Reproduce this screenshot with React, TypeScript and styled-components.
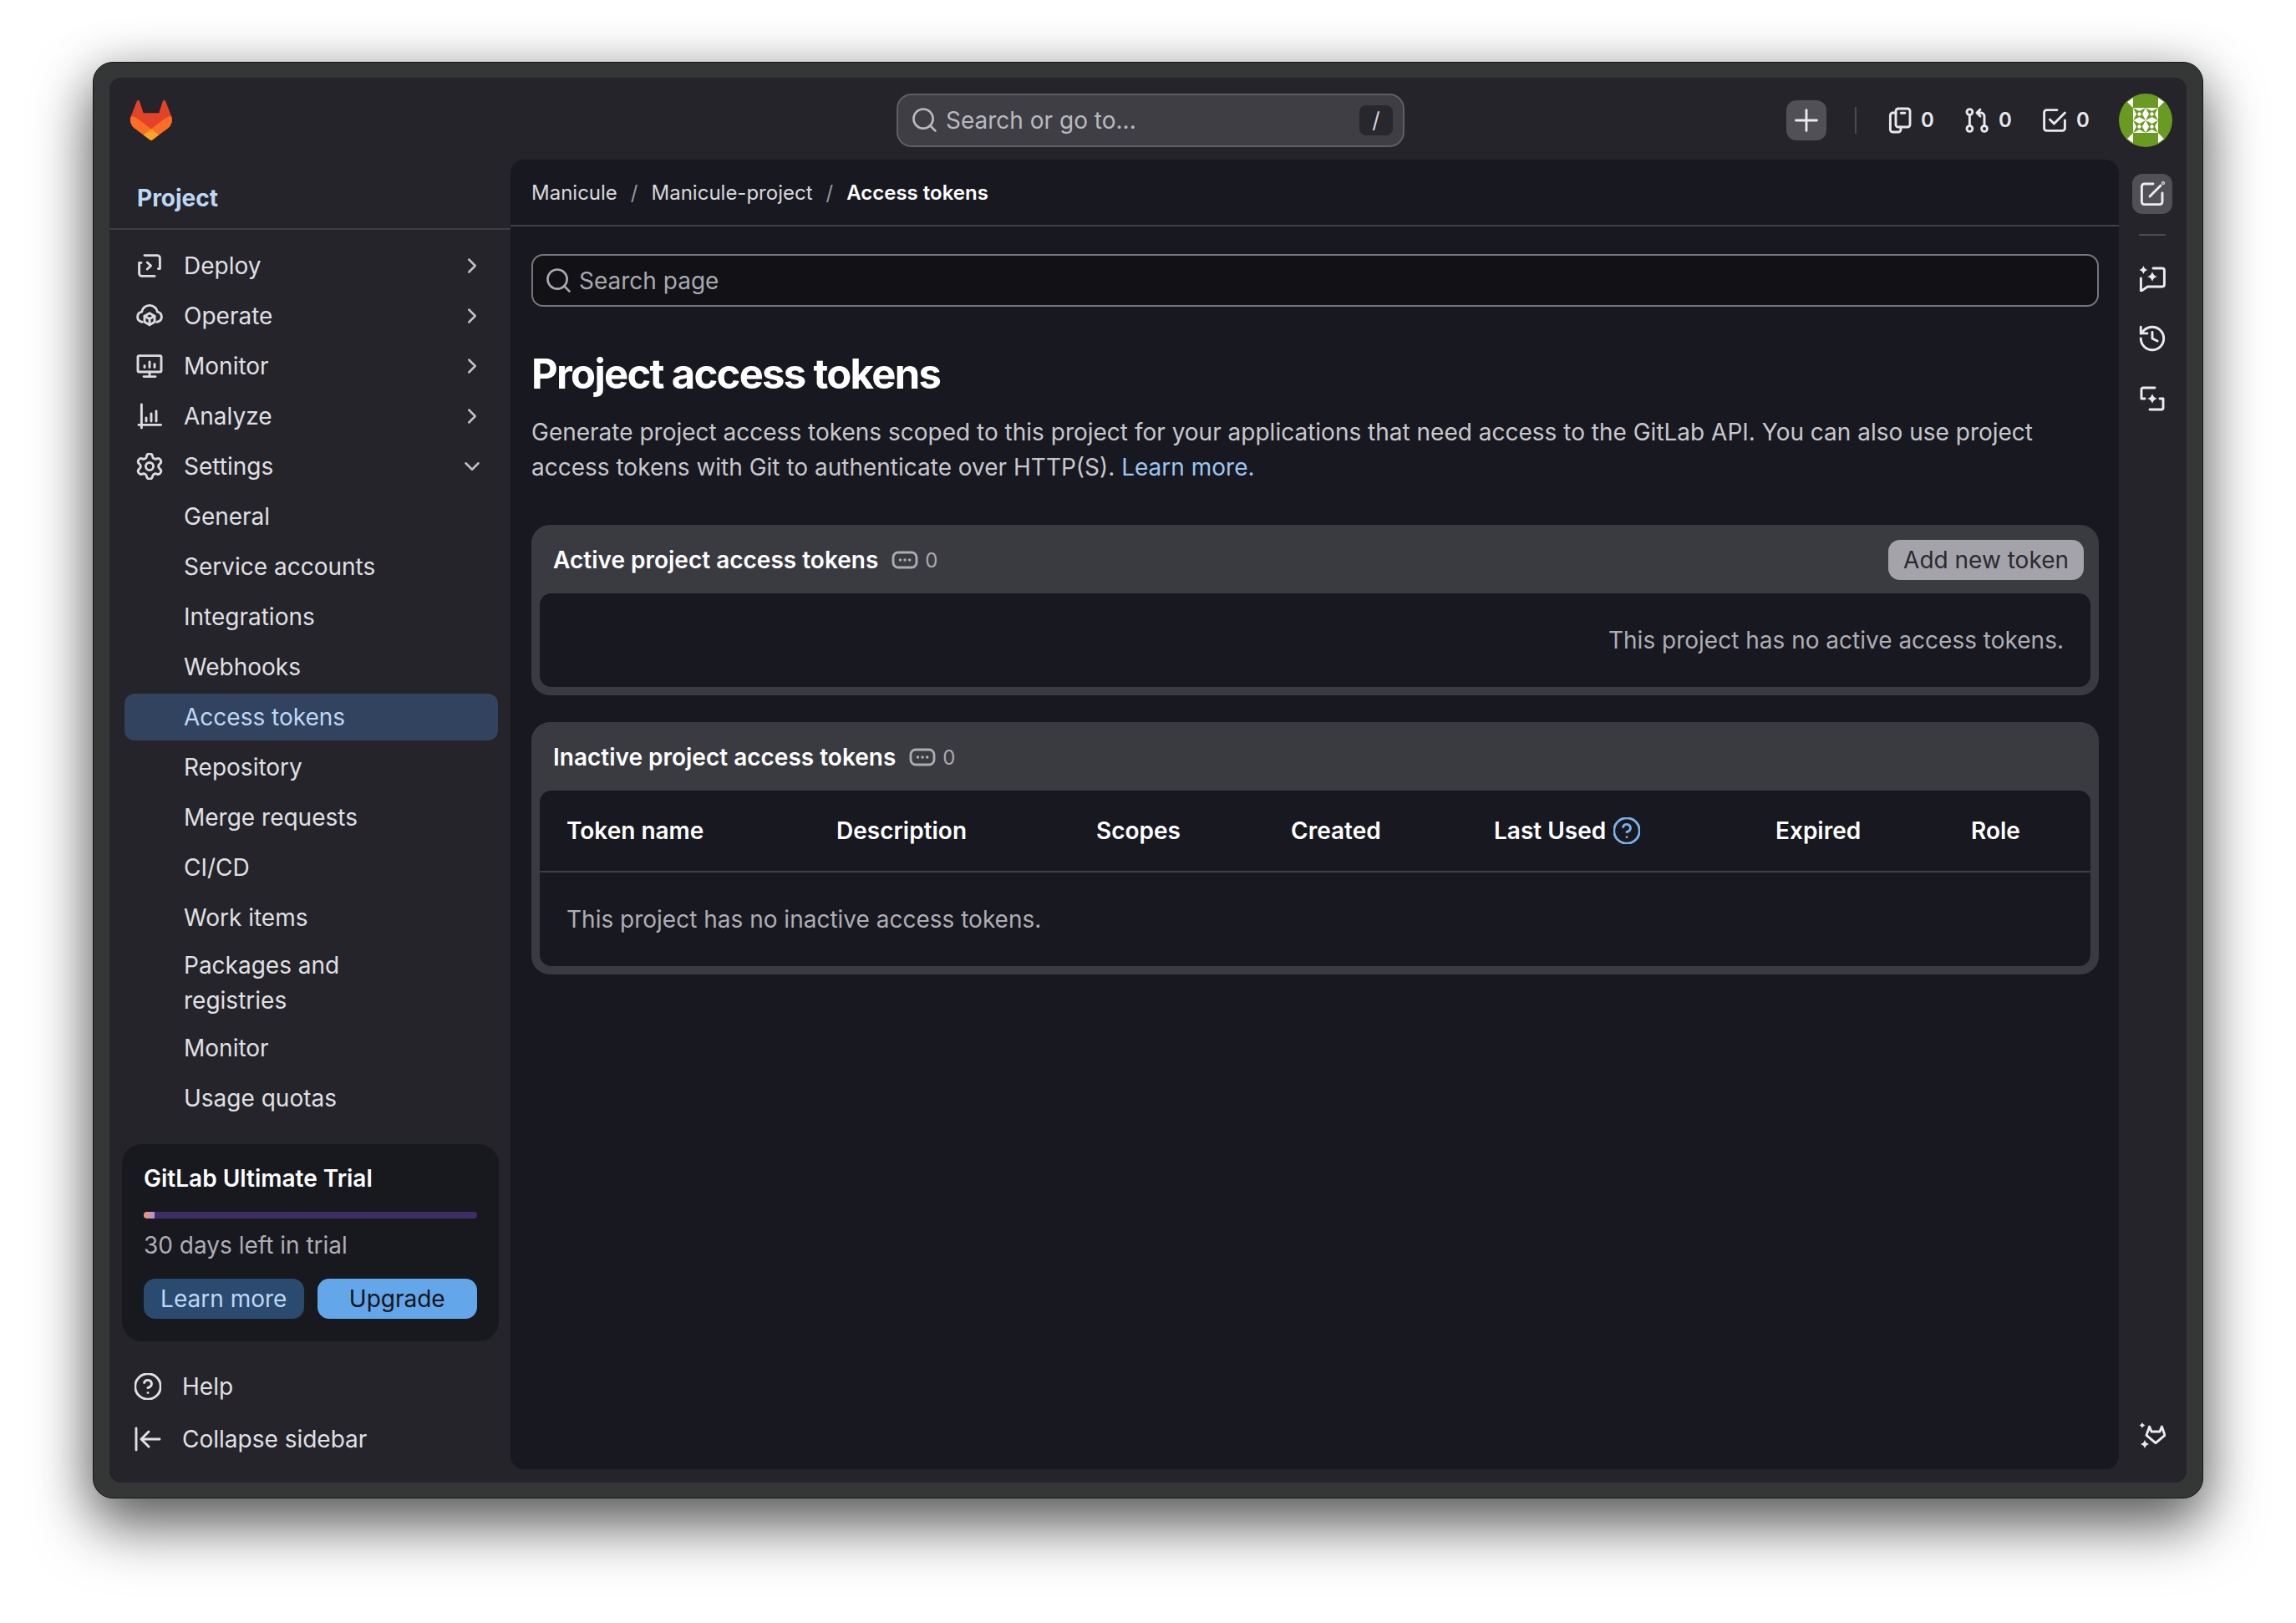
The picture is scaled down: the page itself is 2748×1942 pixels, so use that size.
import React from 'react';
import styled, { createGlobalStyle } from 'styled-components';
import { ChevronDown, ChevronRight, CircleHelp, History, Plus, Search, Settings } from 'lucide-react';

const GlobalStyle = createGlobalStyle`
  html, body {
    margin: 0;
    padding: 0;
    background: #ffffff;
  }
  body {
    font-family: Inter, "Noto Sans", "Liberation Sans", sans-serif;
  }
  * {
    box-sizing: border-box;
  }
`;

const Page = styled.div`
  width: 2748px;
  height: 1942px;
  padding: 74px 111px 149px;
  overflow: hidden;
`;
const Window = styled.div`
  height: 100%;
  padding: 18px 19px;
  background: #353636;
  border: 1.5px solid #16161a;
  border-radius: 24px;
  box-shadow: 0 34px 70px rgba(0, 0, 0, 0.55), 0 8px 60px rgba(0, 0, 0, 0.25);
`;
const Shell = styled.div`
  display: flex;
  flex-direction: column;
  height: 100%;
  background: #24242a;
  border-radius: 14px;
  color: #e4e4e8;
`;
const TopBar = styled.header`
  display: flex;
  align-items: center;
  flex: none;
  height: 98px;
  padding: 3px 17px 0 25px;
`;
const Logo = styled.svg`
  width: 50px;
  height: 48px;
  flex: none;
`;
const GlobalSearch = styled.div`
  display: flex;
  align-items: center;
  gap: 11px;
  width: 608px;
  height: 64px;
  margin-left: 867px;
  padding: 0 12px 0 17px;
  background: #3e3e44;
  border: 2px solid #5e5e65;
  border-radius: 18px;
  color: #b9b9be;
  font-size: 28px;
`;
const GlobalSearchText = styled.span`
  flex: 1;
`;
const Kbd = styled.kbd`
  display: flex;
  align-items: center;
  justify-content: center;
  width: 40px;
  height: 36px;
  background: #27272c;
  border-radius: 8px;
  color: #d4d4d8;
  font-family: inherit;
  font-size: 26px;
`;
const TopActions = styled.div`
  display: flex;
  align-items: center;
  gap: 35px;
  margin-left: auto;
`;
const PlusButton = styled.button`
  display: flex;
  align-items: center;
  justify-content: center;
  width: 48px;
  height: 48px;
  padding: 0;
  background: #505056;
  border: none;
  border-radius: 12px;
  color: #ececf0;
`;
const TopSeparator = styled.span`
  width: 2px;
  height: 32px;
  margin-left: -1px;
  background: #4b4b52;
`;
const Counter = styled.div`
  display: flex;
  align-items: center;
  gap: 10px;
  color: #e8e8ec;
  font-size: 24px;
  font-weight: 600;
`;
const CounterValue = styled.span`
  width: 16px;
`;
const Avatar = styled.svg`
  width: 64px;
  height: 64px;
  flex: none;
`;

const Body = styled.div`
  display: flex;
  flex: 1;
  min-height: 0;
`;
const Sidebar = styled.aside`
  display: flex;
  flex-direction: column;
  flex: none;
  width: 480px;
`;
const SidebarHeader = styled.div`
  display: flex;
  align-items: center;
  flex: none;
  height: 84px;
  padding: 10px 0 0 33px;
  border-bottom: 2px solid #3c3c43;
  color: #bcd8f4;
  font-size: 28px;
  font-weight: 700;
`;
const Nav = styled.nav`
  display: flex;
  flex-direction: column;
  gap: 4px;
  padding: 15px 15px 0 18px;
`;
const NavItem = styled.a<{ $active?: boolean }>`
  display: flex;
  align-items: center;
  gap: 25px;
  min-height: 56px;
  padding: 4px 16px 4px 14px;
  border-radius: 12px;
  background: ${(p) => (p.$active ? '#32435f' : 'transparent')};
  color: ${(p) => (p.$active ? '#bcd8f4' : '#e0e0e4')};
  font-size: 28px;
  line-height: 42px;
`;
const NavIcon = styled.span`
  display: flex;
  flex: none;
  width: 32px;
  height: 32px;
  color: #dcdce0;
`;
const NavLabel = styled.span`
  flex: 1;
  max-width: 270px;
  margin-right: auto;
`;
const NavChevron = styled.span`
  display: flex;
  flex: none;
  color: #c0c0c6;
`;
const TrialCard = styled.section`
  margin: 27px 14px 0 15px;
  padding: 24px 26px 27px 26px;
  background: #18181f;
  border-radius: 24px;
`;
const TrialTitle = styled.div`
  color: #ffffff;
  font-size: 28px;
  font-weight: 600;
  line-height: 34px;
`;
const TrialTrack = styled.div`
  height: 8px;
  margin-top: 23px;
  background: #3d2f66;
  border-radius: 4px;
  overflow: hidden;
`;
const TrialFill = styled.div`
  height: 100%;
  background: linear-gradient(90deg, #f09a62, #b78ce2);
`;
const TrialText = styled.div`
  margin-top: 11px;
  color: #aeaeb4;
  font-size: 28px;
  line-height: 42px;
`;
const TrialActions = styled.div`
  display: grid;
  grid-template-columns: 1fr 1fr;
  gap: 16px;
  margin-top: 19px;
`;
const TrialButton = styled.button<{ $primary?: boolean }>`
  height: 48px;
  padding: 0;
  background: ${(p) => (p.$primary ? '#63a6e9' : '#2a4a6f')};
  border: none;
  border-radius: 14px;
  color: ${(p) => (p.$primary ? '#14141a' : '#bcd8f4')};
  font-family: inherit;
  font-size: 28px;
`;
const SidebarFooter = styled.div`
  display: flex;
  flex-direction: column;
  gap: 7px;
  margin-top: 26px;
`;
const FooterLink = styled.a`
  display: flex;
  align-items: center;
  gap: 25px;
  height: 56px;
  padding-left: 30px;
  color: #e0e0e4;
  font-size: 28px;
`;

const Panel = styled.main`
  flex: 1;
  min-width: 0;
  margin-bottom: 16px;
  background: #181820;
  border-radius: 16px;
`;
const Breadcrumbs = styled.div`
  display: flex;
  align-items: center;
  height: 80px;
  padding: 0 25px;
  border-bottom: 2px solid #3f3f45;
  color: #d8d8dc;
  font-size: 24px;
`;
const CrumbSlash = styled.span`
  margin: 0 16px;
  color: #98989f;
`;
const CrumbCurrent = styled.span`
  color: #ffffff;
  font-weight: 600;
`;
const PageBody = styled.div`
  padding: 33px 24px 0 25px;
`;
const PageSearch = styled.div`
  display: flex;
  align-items: center;
  gap: 10px;
  height: 63px;
  padding: 0 16px;
  background: #111116;
  border: 2px solid #75757b;
  border-radius: 14px;
  color: #a9a9af;
  font-size: 28px;
`;
const Title = styled.h1`
  margin: 51px 0 0;
  color: #ffffff;
  font-size: 49px;
  font-weight: 700;
  line-height: 60px;
  letter-spacing: -0.035em;
`;
const Lead = styled.p`
  margin: 18px 0 0;
  color: #c8c8cd;
  font-size: 28px;
  line-height: 42px;
`;
const LeadLink = styled.a`
  color: #9cc6f0;
`;
const TokenCard = styled.section`
  margin-top: 32px;
  padding: 0 10px 10px;
  background: #3a3a41;
  border-radius: 22px;
  &:first-of-type {
    margin-top: 48px;
  }
`;
const CardHeader = styled.div`
  display: flex;
  align-items: center;
  height: 82px;
  padding: 2px 8px 0 16px;
`;
const CardTitle = styled.h2`
  margin: 0;
  color: #ffffff;
  font-size: 28px;
  font-weight: 600;
`;
const CardCount = styled.span`
  display: flex;
  align-items: center;
  gap: 8px;
  margin-left: 16px;
  color: #ababb1;
  font-size: 24px;
`;
const AddButton = styled.button`
  height: 48px;
  margin-left: auto;
  padding: 0 18px;
  background: #a3a3a9;
  border: none;
  border-radius: 14px;
  color: #2a2a30;
  font-family: inherit;
  font-size: 28px;
`;
const CardBody = styled.div`
  background: #181820;
  border-radius: 14px;
`;
const EmptyActive = styled.div`
  display: flex;
  align-items: center;
  justify-content: flex-end;
  height: 112px;
  padding-right: 32px;
  color: #aeaeb4;
  font-size: 28px;
`;
const TableHead = styled.div`
  display: grid;
  grid-template-columns: 323px 311px 233px 243px 337px 234px 1fr;
  align-items: center;
  height: 98px;
  padding-left: 32px;
  border-bottom: 2px solid #3f3f45;
  color: #ffffff;
  font-size: 28px;
  font-weight: 600;
`;
const HeadCell = styled.div`
  display: flex;
  align-items: center;
  gap: 9px;
`;
const TableEmpty = styled.div`
  display: flex;
  align-items: center;
  height: 112px;
  padding-left: 32px;
  color: #aeaeb4;
  font-size: 28px;
`;

const Rail = styled.aside`
  display: flex;
  flex-direction: column;
  align-items: center;
  flex: none;
  width: 81px;
  padding: 17px 17px 16px 16px;
  margin-bottom: 16px;
  color: #e4e4e8;
`;
const RailButton = styled.button<{ $active?: boolean }>`
  display: flex;
  align-items: center;
  justify-content: center;
  flex: none;
  width: 48px;
  height: 48px;
  margin-top: ${(p) => (p.$active ? '0' : '24px')};
  padding: 0;
  background: ${(p) => (p.$active ? '#505056' : 'transparent')};
  border: none;
  border-radius: 12px;
  color: #ececf0;
`;
const RailDivider = styled.span`
  flex: none;
  width: 32px;
  height: 2px;
  margin: 24px 0 3px;
  background: #4b4b52;
`;
const RailBottom = styled(RailButton)`
  margin-top: auto;
`;

type IconProps = { size?: number };

function GlyphSvg({ size = 32, children }: IconProps & { children: React.ReactNode }) {
  return (
    <svg
      width={size}
      height={size}
      viewBox="0 0 16 16"
      fill="none"
      stroke="currentColor"
      strokeWidth="1.45"
      strokeLinecap="round"
      strokeLinejoin="round"
    >
      {children}
    </svg>
  );
}

// four point sparkle, used by the duo icons
const star = (cx: number, cy: number, r: number) => {
  const k = r * 0.2;
  return (
    `M${cx} ${cy - r}Q${cx + k} ${cy - k} ${cx + r} ${cy}Q${cx + k} ${cy + k} ${cx} ${cy + r}` +
    `Q${cx - k} ${cy + k} ${cx - r} ${cy}Q${cx - k} ${cy - k} ${cx} ${cy - r}Z`
  );
};

const DeployIcon = () => (
  <GlyphSvg>
    <path d="M5 1.800h7.600a1.600 1.600 0 0 1 1.600 1.600v6.400h-1" />
    <path d="M3 6.200H1.800v6.400a1.600 1.600 0 0 0 1.600 1.600H11" />
    <path d="M6.600 6l2.200 2-2.200 2" />
  </GlyphSvg>
);
const OperateIcon = () => (
  <GlyphSvg>
    <path d="M3.600 11.600C1.900 11.300.8 10.100.8 8.600c0-1.500 1.100-2.700 2.500-3C3.700 3.400 5.600 1.700 8 1.700s4.300 1.700 4.700 3.900c1.400.3 2.500 1.500 2.500 3 0 1.500-1.100 2.700-2.800 3" />
    <path d="M8 6.400l3 1.700v3.500l-3 1.800-3-1.800V8.100z" />
    <path d="M5 8.100l3 1.700 3-1.700M8 9.800v3.600" />
  </GlyphSvg>
);
const MonitorIcon = () => (
  <GlyphSvg>
    <rect x="1" y="1.800" width="14" height="9.700" rx="0.800" />
    <path d="M8 11.500v2.800M4.500 14.300h7M5 7.800v1M8 5.500v3.300M11 6.800v2" />
  </GlyphSvg>
);
const AnalyzeIcon = () => (
  <GlyphSvg>
    <path d="M3.200 1v14M1.500 13.200h13.300M6 9v2M9 6.500v4.500M12 5v6" />
  </GlyphSvg>
);
const IssuesIcon = () => (
  <GlyphSvg>
    <rect x="6" y="1" width="8.500" height="11" rx="1.500" />
    <path d="M6 3.500H4.200a1.500 1.500 0 0 0-1.500 1.500v8.500A1.500 1.500 0 0 0 4.200 15h3.300a1.500 1.500 0 0 0 1.500-1.500V12" />
    <path d="M9.200 3.600h2.200" />
  </GlyphSvg>
);
const MergeIcon = () => (
  <GlyphSvg>
    <circle cx="3.700" cy="3" r="1.700" />
    <circle cx="3.700" cy="13" r="1.700" />
    <circle cx="12.500" cy="13" r="1.700" />
    <path d="M3.700 4.700v6.600M12.500 11.300V5.500a2 2 0 0 0-2-2H8.500M10 1.500l-2 2 2 2" />
  </GlyphSvg>
);
const TodoIcon = () => (
  <GlyphSvg>
    <path d="M9.500 1.800H3.300a1.500 1.500 0 0 0-1.500 1.500v9.400a1.500 1.500 0 0 0 1.500 1.500h9.400a1.500 1.500 0 0 0 1.500-1.500V8" />
    <path d="M5.200 7.500l2.500 2.500 6.500-6.500" />
  </GlyphSvg>
);
const EditIcon = () => (
  <GlyphSvg>
    <path d="M8.500 2H3.200a1.500 1.500 0 0 0-1.500 1.500v9.300a1.500 1.500 0 0 0 1.500 1.500h9.300a1.500 1.500 0 0 0 1.500-1.500V7.500" />
    <path d="M6.500 9.500L13 3" />
    <circle cx="14.500" cy="1.500" r="0.300" />
  </GlyphSvg>
);
const DuoChatIcon = () => (
  <GlyphSvg>
    <path d="M8.500 2H14a1.200 1.200 0 0 1 1.200 1.200v8.600A1.200 1.200 0 0 1 14 13H5.200l-4 2.700V8" />
    <path d={star(8, 7, 3)} fill="currentColor" stroke="none" />
    <path d={star(2.700, 3, 2.500)} fill="currentColor" stroke="none" />
  </GlyphSvg>
);
const SummaryIcon = () => (
  <GlyphSvg>
    <path d="M3.500 8H1.500V2.500A1 1 0 0 1 2.500 1.500h7" />
    <path d="M12.500 8h2v5.500a1 1 0 0 1-1 1h-7" />
    <path d={star(8, 8, 3)} fill="currentColor" stroke="none" />
  </GlyphSvg>
);
const DuoIcon = () => (
  <GlyphSvg>
    <path d="M6.300 2.500L7.500 5.500H12.500L13.700 2.500L15.500 7.700L10 12.300L4.500 7.700Z" />
    <path d={star(2, 1.700, 1.700)} fill="currentColor" stroke="none" />
    <path d={star(3.500, 13, 2.600)} fill="currentColor" stroke="none" />
  </GlyphSvg>
);
const CollapseIcon = () => (
  <GlyphSvg>
    <path d="M1 1.500v13M15 8H4M8.500 3.500L4 8l4.500 4.500" />
  </GlyphSvg>
);
const TokenCountIcon = () => (
  <GlyphSvg>
    <rect x="1" y="3.500" width="14" height="9" rx="3" />
    <path d="M5.200 8h.1M8 8h.1M10.800 8h.1" strokeWidth="1.700" />
  </GlyphSvg>
);

const HelpIcon = ({ color }: { color?: string }) => (
  <CircleHelp size={32} viewBox="1.500 1.500 21 21" strokeWidth={1.900} color={color} />
);

const NAV_ITEMS: { label: string; icon?: React.ReactNode; chevron?: 'right' | 'down'; active?: boolean }[] = [
  { label: 'Deploy', icon: <DeployIcon />, chevron: 'right' },
  { label: 'Operate', icon: <OperateIcon />, chevron: 'right' },
  { label: 'Monitor', icon: <MonitorIcon />, chevron: 'right' },
  { label: 'Analyze', icon: <AnalyzeIcon />, chevron: 'right' },
  { label: 'Settings', icon: <Settings size={32} viewBox="1.500 1.500 21 21" strokeWidth={1.900} />, chevron: 'down' },
  { label: 'General' },
  { label: 'Service accounts' },
  { label: 'Integrations' },
  { label: 'Webhooks' },
  { label: 'Access tokens', active: true },
  { label: 'Repository' },
  { label: 'Merge requests' },
  { label: 'CI/CD' },
  { label: 'Work items' },
  { label: 'Packages and registries' },
  { label: 'Monitor' },
  { label: 'Usage quotas' },
];

const TABLE_COLUMNS = ['Token name', 'Description', 'Scopes', 'Created', 'Last Used', 'Expired', 'Role'];

const IDENTICON_CELLS = [
  [17, 17],
  [32, 17],
  [17, 32],
  [32, 32],
];

function App() {
  return (
    <Page>
      <GlobalStyle />
      <Window>
        <Shell>
          <TopBar>
            <Logo viewBox="0 0 25 24">
              <path
                d="m24.507 9.5-.034-.09L21.082.562a.896.896 0 0 0-1.694.091l-2.29 7.01H7.825L5.535.653a.898.898 0 0 0-1.694-.09L.451 9.411.416 9.5a6.297 6.297 0 0 0 2.09 7.278l.012.01.03.022 5.16 3.867 2.56 1.935 1.554 1.176a1.051 1.051 0 0 0 1.268 0l1.555-1.176 2.56-1.935 5.197-3.89.014-.01A6.297 6.297 0 0 0 24.507 9.5Z"
                fill="#E24329"
              />
              <path
                d="m24.507 9.5-.034-.09a11.44 11.44 0 0 0-4.56 2.051l-7.447 5.632 4.742 3.584 5.197-3.89.014-.01A6.297 6.297 0 0 0 24.507 9.5Z"
                fill="#FC6D26"
              />
              <path
                d="m7.707 20.677 2.56 1.935 1.555 1.176a1.051 1.051 0 0 0 1.268 0l1.555-1.176 2.56-1.935-4.743-3.584-4.755 3.584Z"
                fill="#FCA326"
              />
              <path
                d="M5.01 11.461a11.43 11.43 0 0 0-4.56-2.05L.416 9.5a6.297 6.297 0 0 0 2.09 7.278l.012.01.03.022 5.16 3.867 4.745-3.584-7.444-5.632Z"
                fill="#FC6D26"
              />
            </Logo>
            <GlobalSearch>
              <Search size={29} viewBox="2 2 20 20" strokeWidth={1.800} />
              <GlobalSearchText>Search or go to...</GlobalSearchText>
              <Kbd>/</Kbd>
            </GlobalSearch>
            <TopActions>
              <PlusButton>
                <Plus size={32} viewBox="3 3 18 18" strokeWidth={1.600} />
              </PlusButton>
              <TopSeparator />
              <Counter>
                <IssuesIcon />
                <CounterValue>0</CounterValue>
              </Counter>
              <Counter>
                <MergeIcon />
                <CounterValue>0</CounterValue>
              </Counter>
              <Counter>
                <TodoIcon />
                <CounterValue>0</CounterValue>
              </Counter>
              <Avatar viewBox="0 0 64 64">
                <circle cx="32" cy="32" r="32" fill="#6a9a22" />
                <path d="M17 5V17L10 10zM47 5V17L54 10zM17 59V47L10 54zM47 59V47L54 54z" fill="#ffffff" />
                <rect x="17" y="17" width="30" height="30" fill="#ffffff" />
                {IDENTICON_CELLS.map(([x, y]) => (
                  <g key={`${x}-${y}`} transform={`translate(${x} ${y})`}>
                    <path d="M0 0l7.500 4L15 0l-4 7.500L15 15l-7.500-4L0 15l4-7.500z" fill="#6a9a22" />
                    <circle cx="7.500" cy="7.500" r="2.200" fill="#ffffff" />
                  </g>
                ))}
              </Avatar>
            </TopActions>
          </TopBar>
          <Body>
            <Sidebar>
              <SidebarHeader>Project</SidebarHeader>
              <Nav>
                {NAV_ITEMS.map((item) => (
                  <NavItem key={item.label + (item.icon ? 'top' : 'sub')} $active={item.active}>
                    <NavIcon>{item.icon}</NavIcon>
                    <NavLabel>{item.label}</NavLabel>
                    {item.chevron === 'right' && (
                      <NavChevron>
                        <ChevronRight size={30} strokeWidth={2} />
                      </NavChevron>
                    )}
                    {item.chevron === 'down' && (
                      <NavChevron>
                        <ChevronDown size={30} strokeWidth={2} />
                      </NavChevron>
                    )}
                  </NavItem>
                ))}
              </Nav>
              <TrialCard>
                <TrialTitle>GitLab Ultimate Trial</TrialTitle>
                <TrialTrack>
                  <TrialFill style={{ width: `${(1 / 30) * 100}%` }} />
                </TrialTrack>
                <TrialText>30 days left in trial</TrialText>
                <TrialActions>
                  <TrialButton>Learn more</TrialButton>
                  <TrialButton $primary>Upgrade</TrialButton>
                </TrialActions>
              </TrialCard>
              <SidebarFooter>
                <FooterLink>
                  <HelpIcon />
                  <span>Help</span>
                </FooterLink>
                <FooterLink>
                  <CollapseIcon />
                  <span>Collapse sidebar</span>
                </FooterLink>
              </SidebarFooter>
            </Sidebar>
            <Panel>
              <Breadcrumbs>
                <span>Manicule</span>
                <CrumbSlash>/</CrumbSlash>
                <span>Manicule-project</span>
                <CrumbSlash>/</CrumbSlash>
                <CrumbCurrent>Access tokens</CrumbCurrent>
              </Breadcrumbs>
              <PageBody>
                <PageSearch>
                  <Search size={29} viewBox="2 2 20 20" strokeWidth={1.800} />
                  <span>Search page</span>
                </PageSearch>
                <Title>Project access tokens</Title>
                <Lead>
                  Generate project access tokens scoped to this project for your applications that need access to the
                  GitLab API. You can also use project access tokens with Git to authenticate over HTTP(S).{' '}
                  <LeadLink>Learn more.</LeadLink>
                </Lead>
                <TokenCard>
                  <CardHeader>
                    <CardTitle>Active project access tokens</CardTitle>
                    <CardCount>
                      <TokenCountIcon />
                      <span>0</span>
                    </CardCount>
                    <AddButton>Add new token</AddButton>
                  </CardHeader>
                  <CardBody>
                    <EmptyActive>This project has no active access tokens.</EmptyActive>
                  </CardBody>
                </TokenCard>
                <TokenCard>
                  <CardHeader>
                    <CardTitle>Inactive project access tokens</CardTitle>
                    <CardCount>
                      <TokenCountIcon />
                      <span>0</span>
                    </CardCount>
                  </CardHeader>
                  <CardBody>
                    <TableHead>
                      {TABLE_COLUMNS.map((column) => (
                        <HeadCell key={column}>
                          <span>{column}</span>
                          {column === 'Last Used' && <HelpIcon color="#7cb0e8" />}
                        </HeadCell>
                      ))}
                    </TableHead>
                    <TableEmpty>This project has no inactive access tokens.</TableEmpty>
                  </CardBody>
                </TokenCard>
              </PageBody>
            </Panel>
            <Rail>
              <RailButton $active>
                <EditIcon />
              </RailButton>
              <RailDivider />
              <RailButton>
                <DuoChatIcon />
              </RailButton>
              <RailButton>
                <History size={32} viewBox="1.500 1.500 21 21" strokeWidth={1.900} />
              </RailButton>
              <RailButton>
                <SummaryIcon />
              </RailButton>
              <RailBottom>
                <DuoIcon />
              </RailBottom>
            </Rail>
          </Body>
        </Shell>
      </Window>
    </Page>
  );
}

export default App;
